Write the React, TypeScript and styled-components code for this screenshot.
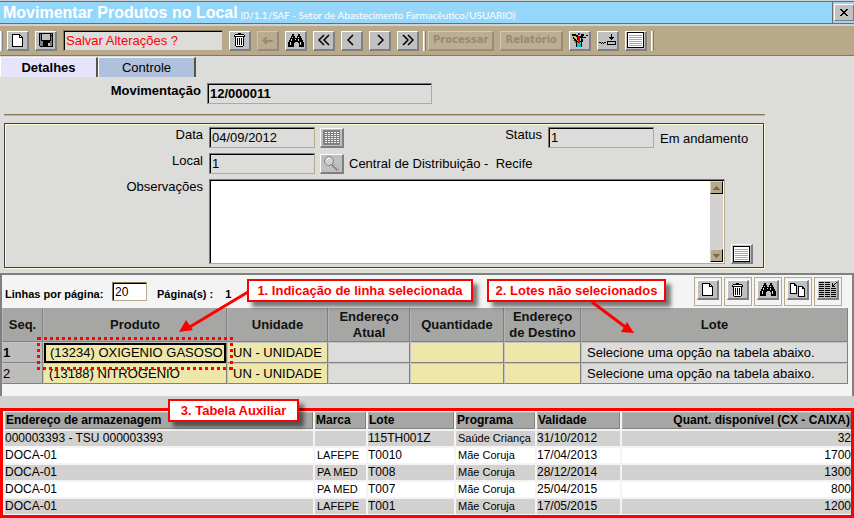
import React from "react";
import styled, { createGlobalStyle } from "styled-components";

const GlobalStyle = createGlobalStyle`
  * { box-sizing: border-box; }
  body {
    margin: 0;
    background: #d2d1cf;
    color: #000;
    font: 13px/16px "Liberation Sans", Arial, sans-serif;
  }
  button, input, textarea { font: inherit; color: inherit; border-radius: 0; margin: 0; }
  h1 { margin: 0; font-size: inherit; }
`;

/* ---------- frame ---------- */
const Page = styled.div`
  display: flex;
  flex-direction: column;
  min-height: 100vh;
`;

const TitleBar = styled.header`
  display: flex;
  align-items: stretch;
  height: 23px;
  margin-top: 1px;
  border-top: 1px solid #6c6c74;
  border-bottom: 1px solid #6c6c74;
  background: #94d7fb;
  color: #fff;
`;

const Title = styled.h1`
  flex: 1;
  display: flex;
  align-items: center;
  gap: 3px;
  padding-left: 3px;
  white-space: nowrap;
  font-size: 16px;
  line-height: 20px;
  font-weight: bold;
`;

const Context = styled.small`
  padding-top: 4px;
  font: 10px/14px Lato, "Liberation Sans", sans-serif;
`;

const CloseBox = styled.div`
  display: flex;
  align-items: center;
  width: 22px;
  padding-left: 1px;
  border-left: 1px solid #6c6c74;
`;

const bevel = "#fff #808080 #808080 #fff";

const CloseButton = styled.button`
  display: flex;
  align-items: center;
  justify-content: center;
  width: 20px;
  height: 17px;
  padding: 0;
  border: 1px solid;
  border-color: ${bevel};
  background: #c0c0c0;
  color: #000;
`;

const Toolbar = styled.div`
  display: flex;
  align-items: center;
  gap: 6px;
  height: 30px;
  margin-top: 2px;
  border-bottom: 1px solid #8a7756;
  background: #b9a98b;
`;

const Separator = styled.span<{ $lead?: boolean }>`
  width: 3px;
  height: 20px;
  margin: ${(p) => (p.$lead ? "0 -2px 0 0" : "0 -4px 0 -2px")};
  border-left: 1px solid #fff;
  border-right: 1px solid #808080;
  background: #d8d4cc;
`;

const IconButton = styled.button<{ $wide?: boolean }>`
  display: flex;
  flex: none;
  align-items: center;
  justify-content: center;
  width: ${(p) => (p.$wide ? 24 : 22)}px;
  height: 20px;
  padding: 0;
  border: 1px solid;
  border-width: 1px 2px 2px 1px;
  border-color: ${bevel};
  background: #c0c0c0;
  color: #000;
  &:disabled {
    border-color: #cfc5b2 #98897a #98897a #cfc5b2;
    background: #b9ab90;
    color: #988a70;
  }
`;

const TextButton = styled.button`
  height: 20px;
  padding: 0 4px;
  border: 1px solid;
  border-width: 1px 2px 2px 1px;
  border-color: #d2c9b8 #9b8d72 #9b8d72 #d2c9b8;
  background: #bcae94;
  font: bold 10px/16px "DejaVu Sans", Verdana, sans-serif;
  &:disabled { color: #978a70; }
`;

const Field = styled.input<{ $w: number; $tone?: string; $strong?: boolean; $bg?: string; $h?: number }>`
  flex: none;
  width: ${(p) => p.$w}px;
  height: ${(p) => p.$h ?? 21}px;
  padding: 0 2px;
  border: 1px solid;
  border-color: #8a7756 #b9a98b #b9a98b #8a7756;
  box-shadow: inset 1px 1px 0 #000;
  background: ${(p) => p.$bg ?? "#dcdcda"};
  color: ${(p) => p.$tone ?? "#000"};
  font-weight: ${(p) => (p.$strong ? "bold" : "normal")};
  outline: none;
`;

/* ---------- form ---------- */
const Body = styled.main`
  padding: 1px 0 5px;
  background: #dcdcda;
`;

const Tabs = styled.div`
  display: flex;
`;

const Tab = styled.button<{ $active?: boolean }>`
  width: 98px;
  height: 20px;
  padding: 0;
  border: solid;
  border-width: 1px 2px 0 1px;
  border-color: #f4f4f4 #55554a #fff #fff;
  background: ${(p) => (p.$active ? "#e6e4fa" : "#b0c1dd")};
  font-weight: ${(p) => (p.$active ? "bold" : "normal")};
`;

const Form = styled.form`
  max-width: 765px;
`;

const FieldRow = styled.div`
  display: grid;
  grid-template-columns: 198px 1fr;
  column-gap: 6px;
`;

const Heading = styled(FieldRow)`
  margin: 6px 0 10px 3px;
`;

const Rule = styled.hr`
  height: 2px;
  margin: 0 0 7px 4px;
  border: 0;
  border-top: 1px solid #8a7756;
  background: #c4b69c;
`;

const Group = styled.div`
  display: flex;
  flex-direction: column;
  gap: 5px;
  margin: 0 1px 0 4px;
  padding: 3px 0;
  border: 1px solid #404038;
  box-shadow: 1px 1px 0 #fffbd8, inset 1px 1px 0 #fffbd8;
`;

const Label = styled.label<{ $strong?: boolean }>`
  text-align: right;
  font-weight: ${(p) => (p.$strong ? "bold" : "normal")};
`;

const Line = styled.div`
  display: flex;
  align-items: center;
  gap: 5px;
`;

const StatusLine = styled.div`
  display: flex;
  gap: 6px;
  margin-left: auto;
`;

const StatusText = styled.span`
  width: 103px;
  padding-top: 4px;
`;

const NotesLine = styled.div`
  display: flex;
  align-items: flex-end;
  gap: 6px;
  padding-right: 10px;
`;

const NotesBox = styled.div`
  display: flex;
  flex: 1;
  height: 85px;
  border: 1px solid;
  border-color: #8a7756 #b9a98b #b9a98b #8a7756;
  box-shadow: inset 1px 1px 0 #000;
  padding: 1px;
  background: #fff;
`;

const Notes = styled.textarea`
  flex: 1;
  padding: 1px 2px;
  border: 0;
  outline: none;
  resize: none;
  overflow: hidden;
  background: #fff;
`;

const ScrollTrack = styled.div`
  display: flex;
  flex-direction: column;
  justify-content: space-between;
  width: 13px;
  background: #d2d1cf;
`;

const ScrollButton = styled.button`
  display: flex;
  align-items: center;
  justify-content: center;
  height: 13px;
  padding: 0;
  border: 1px solid;
  border-color: #dcd4c2 #000 #000 #dcd4c2;
  background: #b9a98b;
`;

/* ---------- product grid ---------- */
const GridPanel = styled.section`
  position: relative;
  height: 123px;
  border: solid #808080;
  border-width: 2px 2px 0 2px;
  background: #f4f4f4;
`;

const Pager = styled.div`
  display: flex;
  align-items: center;
  height: 33px;
  padding: 0 10px 0 3px;
  font-size: 12px;
  font-weight: bold;
`;

const PagerLabel = styled.label`
  width: 107px;
  padding-top: 4px;
  font-size: 11px;
  white-space: nowrap;
`;

const PagerText = styled.span`
  padding: 4px 2px 0 10px;
  font-size: 11px;
`;

const Tools = styled.div`
  display: flex;
  gap: 2px;
  margin-left: auto;
`;

const ToolFrame = styled.div`
  display: flex;
  align-items: center;
  justify-content: center;
  width: 28px;
  height: 29px;
  padding-bottom: 3px;
  border: 1px solid #b9a98b;
`;

const ProductTable = styled.table`
  width: calc(100% - 4px);
  table-layout: fixed;
  border-collapse: separate;
  border-spacing: 0;
`;

const Col = styled.col<{ $w?: number }>`
  width: ${(p) => (p.$w ? `${p.$w}px` : "auto")};
`;

const Th = styled.th`
  height: 34px;
  padding: 0 2px;
  border: solid;
  border-width: 0 1px 1px 1px;
  border-color: #808080 #808080 #808080 #b4b4b4;
  background: #a6a6a4;
  color: #111;
`;

const Td = styled.td<{ $bg: string; $strong?: boolean; $pad?: number }>`
  position: relative;
  height: 21px;
  padding: 0 0 0 ${(p) => p.$pad ?? 0}px;
  border: 1px solid;
  border-color: #c4c4c4 #808080 #808080 #c4c4c4;
  background: ${(p) => p.$bg};
  font-weight: ${(p) => (p.$strong ? "bold" : "normal")};
  white-space: nowrap;
`;

const Cursor = styled.div`
  height: 20px;
  padding-left: 4px;
  margin: -1px 0;
  border: 2px solid #000;
`;

const Marquee = styled.svg`
  position: absolute;
  z-index: 2;
  left: -7px;
  top: -6px;
  width: calc(100% + 11px);
  height: 33px;
  overflow: visible;
`;

const Callout = styled.div<{ $x: number; $y: number; $w: number }>`
  position: absolute;
  z-index: 3;
  left: ${(p) => p.$x}px;
  top: ${(p) => p.$y}px;
  width: ${(p) => p.$w}px;
  height: 23px;
  border: 2px solid #f00;
  background: #fff;
  box-shadow: 5px 5px 4px rgba(0, 0, 0, 0.5);
  color: #f00;
  line-height: 19px;
  font-weight: bold;
  text-align: center;
  white-space: nowrap;
`;

const Arrow = styled.svg<{ $x: number; $y: number }>`
  position: absolute;
  z-index: 4;
  left: ${(p) => p.$x}px;
  top: ${(p) => p.$y}px;
`;

/* ---------- auxiliary table ---------- */
const AuxPanel = styled.section`
  position: relative;
  margin-top: 12px;
  border: 3px solid #f00;
  background: #f4f4f4;
`;

const AuxTable = styled.table`
  width: calc(100% + 2px);
  table-layout: fixed;
  border-collapse: separate;
  border-spacing: 2px;
  margin: -1px 0;
  font-size: 12px;
  line-height: 15px;
`;

const AuxTh = styled.th<{ $right?: boolean }>`
  height: 17px;
  padding: 0;
  border: 1px solid;
  border-color: #b8b8b8 #808080 #808080 #b0b0b0;
  background: #a6a6a4;
  text-align: ${(p) => (p.$right ? "right" : "left")};
  white-space: nowrap;
`;

const AuxTd = styled.td<{ $alt?: boolean; $right?: boolean; $small?: boolean }>`
  height: 15px;
  padding: 0 0 0 ${(p) => (p.$small ? 2 : 0)}px;
  background: ${(p) => (p.$alt ? "#d2d1cf" : "#fff")};
  font-size: ${(p) => (p.$small ? 11 : 12)}px;
  text-align: ${(p) => (p.$right ? "right" : "left")};
  white-space: nowrap;
`;

/* ---------- icons ---------- */
const Crisp = ({ w, h, children }: { w: number; h: number; children: React.ReactNode }) => (
  <svg width={w} height={h} viewBox={`0 0 ${w} ${h}`} shapeRendering="crispEdges" aria-hidden="true">
    {children}
  </svg>
);

const DocIcon = () => (
  <Crisp w={11} h={13}>
    <path d="M0 0h8v1h1v1h1v1h1v10H0z" />
    <path d="M1 1h6v3h3v8H1z" fill="#fff" />
    <path d="M8 2h1v1H8z" fill="#fff" />
  </Crisp>
);

const SaveIcon = () => (
  <Crisp w={14} h={14}>
    <path d="M0 0h14v14H1v-1H0z" />
    <path d="M1 1h1v12H1zM12 3h1v10h-1zM2 8h2v5H2zM11 8h1v5h-1z" fill="#808080" />
    <path d="M3 1h8v6H3zM12 1h1v1h-1z" fill="#c0c0c0" />
    <path d="M9 10h2v3H9z" fill="#c0c0c0" />
  </Crisp>
);

const TrashIcon = () => (
  <Crisp w={11} h={14}>
    <path d="M4 0h3v1h3v1h1v2H0V2h1V1h3z" />
    <path d="M1 2h9v1H1z" fill="#fff" />
    <path d="M1 4h9v9H9v1H2v-1H1z" />
    <path d="M2 4h7v9H2z" fill="#fff" />
    <path d="M3 5h1v7H3zM5 5h1v7H5zM7 5h1v7H7z" />
  </Crisp>
);

const UndoIcon = () => (
  <Crisp w={11} h={7}>
    <path d="M3 0h2v2H4v1h7v1h-1v1H4v0h1v2H3V6H2V5H1V4H0V3h1V2h1V1h1z" fill="currentColor" />
  </Crisp>
);

const FindIcon = () => (
  <Crisp w={16} h={13}>
    <path d="M4 0h2v2h1v2h2V2h1V0h2v2h1v2h1v2h1v2h1v5h-5V9h-1V8H7v1H6v4H0V8h1V6h1V4h1V2h1z" />
    <path d="M4 3h1v1H4zM3 5h1v2H3zM2 8h1v3H2zM10 3h1v1h-1zM10 5h1v2h-1zM12 8h1v3h-1zM7 5h1v1H7z" fill="#d8d8d8" />
  </Crisp>
);

const Chevron = ({ right, double }: { right?: boolean; double?: boolean }) => (
  <svg width="12" height="12" viewBox="0 0 12 12" fill="none" stroke="#000" strokeWidth="1.5" aria-hidden="true">
    {double ? (
      <path d={right ? "M1 1l5 5l-5 5M6 1l5 5l-5 5" : "M6 1l-5 5l5 5M11 1l-5 5l5 5"} />
    ) : (
      <path d={right ? "M4 1l5 5l-5 5" : "M7 1l-5 5l5 5"} />
    )}
  </svg>
);

const ToolsIcon = () => (
  <Crisp w={17} h={15}>
    <path d="M1 1h4v1h1v2H5V3H1zM2 4h2v2h1v2H3V6H2zM10 1h3v2h-1v1h1v1h-2v3h-1V5H9V3h1zM15 2h2v1h-2zM13 4h2v1h-2zM6 2h1v5H6z" />
    <path d="M3 3h2v1h1v3H5V5H3z" fill="#e8d800" />
    <path d="M7 0h2v2H7z" fill="#1030d0" />
    <path d="M7 3h2v6H7z" fill="#e00000" />
    <path d="M4 7h2v1h4V6h2v3h-1v5H5v-4H4z" />
    <path d="M6 9h4v5H6z" fill="#00c8c8" />
    <path d="M7 8h2v2H7z" fill="#e00000" />
    <path d="M4 8h1v2H4z" fill="#00a030" />
  </Crisp>
);

const InsertIcon = () => (
  <Crisp w={17} h={12}>
    <path d="M12 0h1v6h-1zM10 3h5v1h-5zM11 4h3v1h-3zM8 7h9v4H8zM0 8h2v1H0zM2 9h1v1H2zM3 8h1v1H3zM4 9h1v1H4zM5 8h2v1H5z" />
    <path d="M9 8h7v2H9z" fill="#c0c0c0" />
  </Crisp>
);

const ListIcon = () => (
  <Crisp w={17} h={16}>
    <path d="M0 0h17v16H0z" />
    <path d="M1 1h15v14H1z" fill="#fff" />
    <path d="M2 3h13v1H2zM2 5h13v1H2zM2 7h13v1H2zM2 9h13v1H2zM2 11h13v1H2zM2 13h13v1H2z" fill="#a8a8a8" />
  </Crisp>
);

const CalendarIcon = () => (
  <Crisp w={17} h={15}>
    <path d="M0 0h17v15H0z" fill="#808080" />
    {[2, 4, 6, 8, 10, 12].flatMap((y) => [2, 5, 8, 11, 14].map((x) => (
      <rect key={`${x}-${y}`} x={x} y={y} width="2" height="1" fill="#f0f0f0" />
    )))}
  </Crisp>
);

const LensIcon = () => (
  <svg width="17" height="15" viewBox="0 0 17 15" fill="none" stroke="#858585" aria-hidden="true">
    <circle cx="6" cy="5" r="4.5" fill="#cfcfcf" />
    <path d="M9 8l6 6" strokeWidth="3" />
    <path d="M10 8l5 5" stroke="#e0e0e0" />
    <path d="M4 4a3 3 0 0 1 3-2" stroke="#fff" />
  </svg>
);

const CopyIcon = () => (
  <Crisp w={16} h={14}>
    <path d="M0 0h5v1h1v1h1v9H0z" />
    <path d="M1 1h3v2h2v7H1z" fill="#fff" />
    <path d="M8 3h5v1h1v1h1v9H8z" />
    <path d="M9 4h3v2h2v7H9z" fill="#fff" />
  </Crisp>
);

const ColumnsIcon = () => (
  <Crisp w={18} h={15}>
    {[0, 2, 4, 6, 8, 10, 12, 14].map((y) => (
      <path key={y} d={`M0 ${y}h5v1H0zM6 ${y}h5v1H6z`} />
    ))}
    {[6, 8, 10, 12, 14].map((y) => (
      <path key={y} d={`M12 ${y}h5v1h-5z`} />
    ))}
    <path d="M17 0h1v1h-1zM16 1h1v1h-1zM15 2h1v1h-1zM13 1h1v2h1v1h1v1h-3z" />
  </Crisp>
);

const CloseIcon = () => (
  <Crisp w={8} h={7}>
    <path d="M0 0h2v1h1v1h2V1h1V0h2v1H7v1H6v1H5v1h1v1h1v1h1v1H6V6H5V5H3v1H2v1H0V6h1V5h1V4h1V3H2V2H1V1H0z" />
  </Crisp>
);

const ScrollGlyph = ({ down }: { down?: boolean }) => (
  <Crisp w={7} h={4}>
    <path d={down ? "M0 0h7v1H6v1H5v1H4v1H3V3H2V2H1V1H0z" : "M3 0h1v1h1v1h1v1h1v1H0V3h1V2h1V1h1z"} fill="#7c6b4a" />
  </Crisp>
);

/* ---------- data ---------- */
const YELLOW = "#efe6aa";
const GREY = "#dcdcda";

const products = [
  { seq: 1, name: "(13234) OXIGENIO GASOSO", selected: true },
  { seq: 2, name: "(13188) NITROGENIO", selected: false },
];

const stock = [
  ["000003393 - TSU 000003393", "", "115TH001Z", "Saúde Criança", "31/10/2012", "32"],
  ["DOCA-01", "LAFEPE", "T0010", "Mãe Coruja", "17/04/2013", "1700"],
  ["DOCA-01", "PA MED", "T008", "Mãe Coruja", "28/12/2014", "1300"],
  ["DOCA-01", "PA MED", "T007", "Mãe Coruja", "25/04/2015", "800"],
  ["DOCA-01", "LAFEPE", "T001", "Mãe Coruja", "17/05/2015", "1200"],
];

const gridTools = [
  { name: "Novo", icon: <DocIcon /> },
  { name: "Excluir", icon: <TrashIcon /> },
  { name: "Localizar", icon: <FindIcon /> },
  { name: "Copiar", icon: <CopyIcon /> },
  { name: "Colunas", icon: <ColumnsIcon /> },
];

export default function App() {
  return (
    <Page>
      <GlobalStyle />
      <TitleBar>
        <Title>
          Movimentar Produtos no Local
          <Context>(0/1.1/SAF - Setor de Abastecimento Farmacêutico/USUARIO)</Context>
        </Title>
        <CloseBox>
          <CloseButton aria-label="Fechar"><CloseIcon /></CloseButton>
        </CloseBox>
      </TitleBar>

      <Toolbar>
        <Separator $lead />
        <IconButton aria-label="Novo"><DocIcon /></IconButton>
        <IconButton aria-label="Salvar"><SaveIcon /></IconButton>
        <Field aria-label="Mensagem" $w={160} $tone="#f00" readOnly value="Salvar Alterações ?" />
        <IconButton aria-label="Excluir"><TrashIcon /></IconButton>
        <IconButton aria-label="Desfazer" disabled><UndoIcon /></IconButton>
        <IconButton aria-label="Localizar"><FindIcon /></IconButton>
        <IconButton aria-label="Primeiro"><Chevron double /></IconButton>
        <IconButton aria-label="Anterior"><Chevron /></IconButton>
        <IconButton aria-label="Próximo"><Chevron right /></IconButton>
        <IconButton aria-label="Último"><Chevron right double /></IconButton>
        <Separator />
        <TextButton disabled>Processar</TextButton>
        <TextButton disabled>Relatório</TextButton>
        <IconButton aria-label="Ferramentas"><ToolsIcon /></IconButton>
        <IconButton aria-label="Inserir"><InsertIcon /></IconButton>
        <IconButton aria-label="Lista"><ListIcon /></IconButton>
        <Separator />
      </Toolbar>

      <Body>
        <Tabs role="tablist">
          <Tab role="tab" aria-selected="true" $active>Detalhes</Tab>
          <Tab role="tab" aria-selected="false">Controle</Tab>
        </Tabs>
        <Form>
          <Heading>
            <Label $strong htmlFor="mov">Movimentação</Label>
            <Field id="mov" $w={225} $strong readOnly value="12/000011" />
          </Heading>
          <Rule />
          <Group>
            <FieldRow>
              <Label htmlFor="data">Data</Label>
              <Line>
                <Field id="data" $w={106} readOnly value="04/09/2012" />
                <IconButton type="button" aria-label="Calendário" $wide><CalendarIcon /></IconButton>
                <StatusLine>
                  <Label htmlFor="status">Status</Label>
                  <Field id="status" $w={106} readOnly value="1" />
                  <StatusText>Em andamento</StatusText>
                </StatusLine>
              </Line>
            </FieldRow>
            <FieldRow>
              <Label htmlFor="local">Local</Label>
              <Line>
                <Field id="local" $w={106} readOnly value="1" />
                <IconButton type="button" aria-label="Pesquisar" $wide><LensIcon /></IconButton>
                <span>Central de Distribuição -&nbsp; Recife</span>
              </Line>
            </FieldRow>
            <FieldRow>
              <Label htmlFor="obs">Observações</Label>
              <NotesLine>
                <NotesBox>
                  <Notes id="obs" />
                  <ScrollTrack>
                    <ScrollButton type="button" aria-label="Subir"><ScrollGlyph /></ScrollButton>
                    <ScrollButton type="button" aria-label="Descer"><ScrollGlyph down /></ScrollButton>
                  </ScrollTrack>
                </NotesBox>
                <IconButton type="button" aria-label="Abrir texto"><ListIcon /></IconButton>
              </NotesLine>
            </FieldRow>
          </Group>
        </Form>
      </Body>

      <GridPanel>
        <Pager>
          <PagerLabel htmlFor="lines">Linhas por página:</PagerLabel>
          <Field id="lines" $w={35} $h={19} $bg="#fff" defaultValue="20" />
          <PagerText>Página(s) :</PagerText>
          <PagerText>1</PagerText>
          <Tools>
            {gridTools.map((t) => (
              <ToolFrame key={t.name}>
                <IconButton aria-label={t.name}>{t.icon}</IconButton>
              </ToolFrame>
            ))}
          </Tools>
        </Pager>
        <ProductTable>
          <colgroup>
            <Col $w={41} /><Col $w={184} /><Col $w={101} /><Col $w={82} />
            <Col $w={94} /><Col $w={77} /><Col />
          </colgroup>
          <thead>
            <tr>
              <Th>Seq.</Th>
              <Th>Produto</Th>
              <Th>Unidade</Th>
              <Th>Endereço Atual</Th>
              <Th>Quantidade</Th>
              <Th>Endereço de Destino</Th>
              <Th>Lote</Th>
            </tr>
          </thead>
          <tbody>
            {products.map((p) => (
              <tr key={p.seq}>
                <Td $bg="#bcbcba" $strong={p.selected}>{p.seq}</Td>
                <Td $bg={YELLOW} $pad={p.selected ? 0 : 5}>
                  {p.selected ? <Cursor>{p.name}</Cursor> : p.name}
                  {p.selected && (
                    <Marquee aria-hidden="true">
                      <rect x="1" y="1" width="100%" height="30" fill="none" stroke="#f00" strokeWidth="3" strokeDasharray="3 3" shapeRendering="crispEdges" />
                    </Marquee>
                  )}
                </Td>
                <Td $bg={YELLOW} $pad={5}>UN - UNIDADE</Td>
                <Td $bg={GREY} />
                <Td $bg={YELLOW} />
                <Td $bg={YELLOW} />
                <Td $bg={GREY} $pad={5}>Selecione uma opção na tabela abaixo.</Td>
              </tr>
            ))}
          </tbody>
        </ProductTable>
        <Callout $x={245} $y={4} $w={226}>1. Indicação de linha selecionada</Callout>
        <Callout $x={485} $y={4} $w={179}>2. Lotes não selecionados</Callout>
        <Arrow $x={176} $y={15} width="72" height="44" viewBox="0 0 72 44" fill="#f00" aria-hidden="true">
          <path d="M70 2L10 38" stroke="#f00" strokeWidth="3" />
          <path d="M1 42L8 30L15 40z" />
        </Arrow>
        <Arrow $x={586} $y={26} width="50" height="36" viewBox="0 0 50 36" fill="#f00" aria-hidden="true">
          <path d="M4 1L40 28" stroke="#f00" strokeWidth="3" />
          <path d="M39 21L46 32L33 31z" />
        </Arrow>
      </GridPanel>

      <AuxPanel>
        <Callout $x={165} $y={-12} $w={131}>3. Tabela Auxiliar</Callout>
        <AuxTable>
          <colgroup>
            <Col $w={308} /><Col $w={51} /><Col $w={86} /><Col $w={79} /><Col $w={83} /><Col />
          </colgroup>
          <thead>
            <tr>
              <AuxTh>Endereço de armazenagem</AuxTh>
              <AuxTh>Marca</AuxTh>
              <AuxTh>Lote</AuxTh>
              <AuxTh>Programa</AuxTh>
              <AuxTh>Validade</AuxTh>
              <AuxTh $right>Quant. disponível (CX - CAIXA)</AuxTh>
            </tr>
          </thead>
          <tbody>
            {stock.map((row, i) => (
              <tr key={i}>
                {row.map((cell, c) => (
                  <AuxTd key={c} $alt={i % 2 === 0} $right={c === 5} $small={c === 1 || c === 3}>{cell}</AuxTd>
                ))}
              </tr>
            ))}
          </tbody>
        </AuxTable>
      </AuxPanel>
    </Page>
  );
}
